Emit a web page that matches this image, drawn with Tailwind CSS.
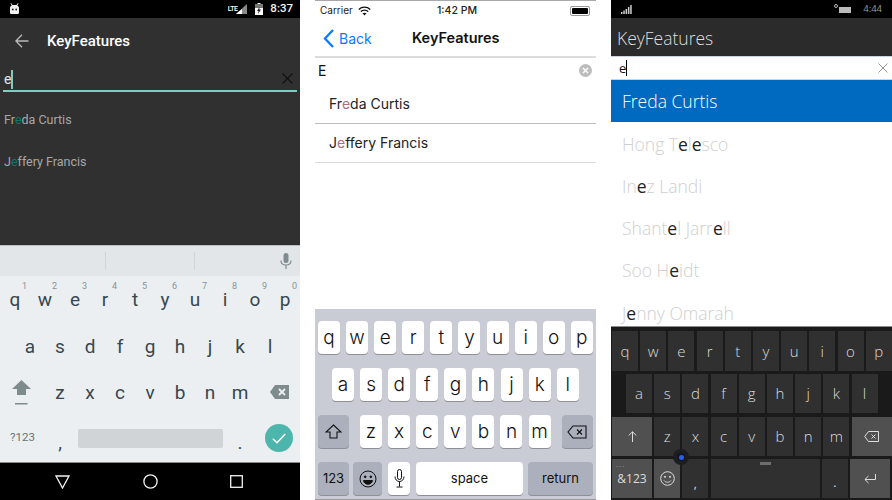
<!DOCTYPE html>
<html lang="en">
<head>
  <meta charset="UTF-8">
  <title>KeyFeatures</title>
  <script src="https://cdn.jsdelivr.net/npm/@tailwindcss/browser@4"></script>
</head>
<body class="bg-white overflow-hidden">
<div class="w-[892px] h-[500px] flex overflow-hidden">

  <!-- Android -->
  <div class="w-[300px] h-[500px] flex flex-col font-['Roboto',sans-serif]">
    <div class="h-[18px] bg-black flex items-center pl-[9px] pr-[7px] text-white">
      <svg width="11" height="12" viewBox="0 0 11 12"><path d="M2 0l1.5 2h4L9 0l.5.4L8.3 2.4c1 .6 1.7 1.4 1.7 2.6v4.5c0 1-.8 1.5-1.6 1.5H2.600C1.800 11 1 10.500 1 9.500V5c0-1.200.7-2 1.700-2.600L1.500.4z" fill="#f1f1f1"/><circle cx="3.800" cy="6.500" r=".9" fill="#222"/><circle cx="7.200" cy="6.500" r=".9" fill="#222"/></svg>
      <div class="ml-auto flex items-center">
        <span class="text-[7px] leading-none font-medium self-start mt-[3px] mr-[-3px] tracking-[-0.5px]">LTE</span>
        <svg width="14" height="12" viewBox="0 0 14 12"><path d="M13 1v10H2z" fill="#8a8a8a"/><path d="M8 6v5H2z" fill="#fff"/></svg>
        <svg class="ml-[7px]" width="8" height="12" viewBox="0 0 8 12"><path d="M2.500 0h3v1H8v11H0V1h2.500z" fill="#fff"/><path d="M0 1h8v4H0z" fill="#777"/><path d="M4.500 4L2 8h1.500L3 11l3-4.500H4.300z" fill="#222"/></svg>
        <span class="ml-[7px] text-[11.500px] leading-none font-medium text-[#f4f4f4]">8:37</span>
      </div>
    </div>
    <div class="h-[227px] bg-[#303030] flex flex-col">
      <div class="h-[46px] flex items-center">
        <svg class="ml-[15px]" width="14" height="14" viewBox="0 0 14 14" fill="none" stroke="#b9b9b9" stroke-width="1.300"><path d="M13.500 7H1M7 .8L.9 7 7 13.200"/></svg>
        <span class="ml-[18px] text-[15px] font-medium text-white">KeyFeatures</span>
      </div>
      <div class="h-[26px] mx-[3px] border-b-2 border-[#80cbc4] box-content flex items-center relative">
        <span class="ml-[1px] text-[14px] leading-none text-[#e4e4e4] mt-[4px]">e</span>
        <span class="w-[2px] h-[19px] bg-[#80cbc4] mt-[5px]"></span>
        <svg class="ml-auto mr-[4px] mt-[3px]" width="11" height="11" viewBox="0 0 11 11" stroke="#111" stroke-width="1.200"><path d="M.5.5l10 10M10.500.5l-10 10"/></svg>
      </div>
      <div class="h-[42px] mt-[7px] pl-[4px] flex items-center text-[12.500px] text-[#a8a8a8]"><span>Fr<span class="text-[#0f766e]">e</span>da Curtis</span></div>
      <div class="h-[42px] pl-[4px] flex items-center text-[12.500px] text-[#a8a8a8]"><span>J<span class="text-[#0f766e]">e</span>ffery Francis</span></div>
    </div>
    <div class="h-[31px] bg-[#e3e6e9] border-t border-[#bcbfc1] flex items-center">
      <span class="ml-[105px] w-px h-[18px] bg-[#d2d5d8]"></span>
      <span class="ml-[88px] w-px h-[18px] bg-[#d2d5d8]"></span>
      <svg class="ml-[85px]" width="12" height="16" viewBox="0 0 12 16" fill="#7f8b90"><rect x="3.500" y="0" width="5" height="10" rx="2.500"/><path d="M1 7.500c0 3 2.200 4.500 5 4.500s5-1.500 5-4.500" fill="none" stroke="#7f8b90" stroke-width="1.200"/><rect x="5.400" y="12" width="1.200" height="4"/></svg>
    </div>
    <div class="h-[186px] bg-[#eceff1] text-[#37474f] text-[19px] leading-none">
      <div class="h-[47px] flex">
        <span class="w-[30px] flex items-center justify-center relative">q<span class="absolute top-[6px] right-[3px] text-[9px] text-[#87939a]">1</span></span>
        <span class="w-[30px] flex items-center justify-center relative">w<span class="absolute top-[6px] right-[3px] text-[9px] text-[#87939a]">2</span></span>
        <span class="w-[30px] flex items-center justify-center relative">e<span class="absolute top-[6px] right-[3px] text-[9px] text-[#87939a]">3</span></span>
        <span class="w-[30px] flex items-center justify-center relative">r<span class="absolute top-[6px] right-[3px] text-[9px] text-[#87939a]">4</span></span>
        <span class="w-[30px] flex items-center justify-center relative">t<span class="absolute top-[6px] right-[3px] text-[9px] text-[#87939a]">5</span></span>
        <span class="w-[30px] flex items-center justify-center relative">y<span class="absolute top-[6px] right-[3px] text-[9px] text-[#87939a]">6</span></span>
        <span class="w-[30px] flex items-center justify-center relative">u<span class="absolute top-[6px] right-[3px] text-[9px] text-[#87939a]">7</span></span>
        <span class="w-[30px] flex items-center justify-center relative">i<span class="absolute top-[6px] right-[3px] text-[9px] text-[#87939a]">8</span></span>
        <span class="w-[30px] flex items-center justify-center relative">o<span class="absolute top-[6px] right-[3px] text-[9px] text-[#87939a]">9</span></span>
        <span class="w-[30px] flex items-center justify-center relative">p<span class="absolute top-[6px] right-[3px] text-[9px] text-[#87939a]">0</span></span>
      </div>
      <div class="h-[46px] flex pl-[15px]">
        <span class="w-[30px] flex items-center justify-center">a</span>
        <span class="w-[30px] flex items-center justify-center">s</span>
        <span class="w-[30px] flex items-center justify-center">d</span>
        <span class="w-[30px] flex items-center justify-center">f</span>
        <span class="w-[30px] flex items-center justify-center">g</span>
        <span class="w-[30px] flex items-center justify-center">h</span>
        <span class="w-[30px] flex items-center justify-center">j</span>
        <span class="w-[30px] flex items-center justify-center">k</span>
        <span class="w-[30px] flex items-center justify-center">l</span>
      </div>
      <div class="h-[46px] flex">
        <span class="w-[45px] flex items-center justify-center">
          <svg width="19" height="25" viewBox="0 0 19 25" fill="#7f8c8d" class="mr-[3px]"><path d="M9.500 0L19 9h-5v6H5V9H0z"/><rect x="3" y="23" width="12.500" height="1.500"/></svg>
        </span>
        <span class="w-[30px] flex items-center justify-center">z</span>
        <span class="w-[30px] flex items-center justify-center">x</span>
        <span class="w-[30px] flex items-center justify-center">c</span>
        <span class="w-[30px] flex items-center justify-center">v</span>
        <span class="w-[30px] flex items-center justify-center">b</span>
        <span class="w-[30px] flex items-center justify-center">n</span>
        <span class="w-[30px] flex items-center justify-center">m</span>
        <span class="w-[45px] flex items-center justify-center">
          <svg width="19" height="14" viewBox="0 0 19 14" class="ml-[4px]"><path d="M5 0h14v14H5L0 7z" fill="#7f8c8d"/><path d="M9 4l6 6M15 4l-6 6" stroke="#eceff1" stroke-width="1.800"/></svg>
        </span>
      </div>
      <div class="h-[46px] flex items-center">
        <span class="w-[45px] text-center text-[11.500px] text-[#65737a]">?123</span>
        <span class="w-[30px] text-center relative top-[4px]">,</span>
        <span class="w-[145px] ml-[3px] h-[19px] bg-[#d0d4d7] rounded-[2px]"></span>
        <span class="w-[30px] ml-[2px] text-center relative top-[4px]">.</span>
        <span class="ml-[10px] w-[28px] h-[28px] rounded-full bg-[#4db6ac] flex items-center justify-center">
          <svg width="14" height="11" viewBox="0 0 14 11" fill="none" stroke="#fff" stroke-width="1.500"><path d="M.8 5.800L5 9.800 13.200 1"/></svg>
        </span>
      </div>
    </div>
    <div class="h-[38px] bg-black border-t border-[#8a8a8a] flex items-center">
      <svg class="ml-[55px]" width="15" height="14" viewBox="0 0 15 14" fill="none" stroke="#f2f2f2" stroke-width="1.300"><path d="M1 1h13L7.500 13z"/></svg>
      <svg class="ml-[73px]" width="15" height="15" viewBox="0 0 15 15" fill="none" stroke="#f2f2f2" stroke-width="1.300"><circle cx="7.500" cy="7.500" r="6.600"/></svg>
      <svg class="ml-[72px]" width="13" height="13" viewBox="0 0 13 13" fill="none" stroke="#f2f2f2" stroke-width="1.300"><rect x=".7" y=".7" width="11.600" height="11.600"/></svg>
    </div>
  </div>

  <!-- iOS -->
  <div class="w-[281px] ml-[15px] h-[500px] flex flex-col font-['Inter',sans-serif] bg-white">
    <div class="h-[20px] border-t border-[#a8a8a8] flex items-center relative text-[10px] text-[#222] pl-[5px]">
      <span>Carrier</span>
      <svg class="ml-[5px]" width="13" height="10" viewBox="0 0 13 10" fill="none" stroke="#111" stroke-width="1.400"><path d="M.8 3.400c3.200-3 8.200-3 11.400 0M2.800 5.600c2.100-1.900 5.300-1.900 7.400 0"/><path d="M4.500 7.300c1.100-.9 2.900-.9 4 0L6.500 9.500z" fill="#111" stroke="none"/></svg>
      <span class="absolute left-[122px] text-[10.500px] font-medium">1:42 PM</span>
      <span class="ml-auto mr-[6px] w-[20px] h-[10px] border border-[#999] rounded-[2px] p-px flex"><span class="flex-1 bg-black rounded-[1px]"></span></span>
    </div>
    <div class="h-[38px] flex items-center relative border-b-2 border-[#dcdcdc]">
      <svg class="ml-[8px]" width="11" height="19" viewBox="0 0 11 19" fill="none" stroke="#0a7aff" stroke-width="2.300"><path d="M10 1L2 9.500 10 18"/></svg>
      <span class="ml-[5px] text-[14px] text-[#0a7aff]">Back</span>
      <span class="absolute left-[97px] text-[14.500px] font-semibold text-[#111]">KeyFeatures</span>
    </div>
    <div class="h-[25px] flex items-center pl-[3px] pr-[4px] text-[14px] text-[#111]">
      <span>E</span>
      <svg class="ml-auto" width="13" height="13" viewBox="0 0 13 13"><circle cx="6.500" cy="6.500" r="6.500" fill="#bdbdbd"/><path d="M4 4l5 5M9 4l-5 5" stroke="#fff" stroke-width="1.500"/></svg>
    </div>
    <div class="h-[41px] border-b border-[#bdbdbd] flex items-center pl-[14px] text-[14px] text-[#222]"><span>Fr<span class="text-[#b06a80]">e</span>da Curtis</span></div>
    <div class="h-[39px] border-b border-[#dcdcdc] flex items-center pl-[14px] pb-[2px] text-[14px] text-[#222]"><span>J<span class="text-[#b06a80]">e</span>ffery Francis</span></div>
    <div class="h-[146px]"></div>
    <div class="h-[191px] bg-[#c9ccd5] pt-[12px] pl-[3px] text-[#111] text-[19px] leading-none border-b border-[#9a9a9a] font-light">
      <div class="flex gap-[6.100px] h-[33px]">
        <span class="w-[22px] bg-white rounded-[4px] shadow-[0_1px_0_#8e9096] flex items-center justify-center">q</span>
        <span class="w-[22px] bg-white rounded-[4px] shadow-[0_1px_0_#8e9096] flex items-center justify-center">w</span>
        <span class="w-[22px] bg-white rounded-[4px] shadow-[0_1px_0_#8e9096] flex items-center justify-center">e</span>
        <span class="w-[22px] bg-white rounded-[4px] shadow-[0_1px_0_#8e9096] flex items-center justify-center">r</span>
        <span class="w-[22px] bg-white rounded-[4px] shadow-[0_1px_0_#8e9096] flex items-center justify-center">t</span>
        <span class="w-[22px] bg-white rounded-[4px] shadow-[0_1px_0_#8e9096] flex items-center justify-center">y</span>
        <span class="w-[22px] bg-white rounded-[4px] shadow-[0_1px_0_#8e9096] flex items-center justify-center">u</span>
        <span class="w-[22px] bg-white rounded-[4px] shadow-[0_1px_0_#8e9096] flex items-center justify-center">i</span>
        <span class="w-[22px] bg-white rounded-[4px] shadow-[0_1px_0_#8e9096] flex items-center justify-center">o</span>
        <span class="w-[22px] bg-white rounded-[4px] shadow-[0_1px_0_#8e9096] flex items-center justify-center">p</span>
      </div>
      <div class="flex gap-[6.100px] h-[33px] mt-[14px] ml-[14px]">
        <span class="w-[22px] bg-white rounded-[4px] shadow-[0_1px_0_#8e9096] flex items-center justify-center">a</span>
        <span class="w-[22px] bg-white rounded-[4px] shadow-[0_1px_0_#8e9096] flex items-center justify-center">s</span>
        <span class="w-[22px] bg-white rounded-[4px] shadow-[0_1px_0_#8e9096] flex items-center justify-center">d</span>
        <span class="w-[22px] bg-white rounded-[4px] shadow-[0_1px_0_#8e9096] flex items-center justify-center">f</span>
        <span class="w-[22px] bg-white rounded-[4px] shadow-[0_1px_0_#8e9096] flex items-center justify-center">g</span>
        <span class="w-[22px] bg-white rounded-[4px] shadow-[0_1px_0_#8e9096] flex items-center justify-center">h</span>
        <span class="w-[22px] bg-white rounded-[4px] shadow-[0_1px_0_#8e9096] flex items-center justify-center">j</span>
        <span class="w-[22px] bg-white rounded-[4px] shadow-[0_1px_0_#8e9096] flex items-center justify-center">k</span>
        <span class="w-[22px] bg-white rounded-[4px] shadow-[0_1px_0_#8e9096] flex items-center justify-center">l</span>
      </div>
      <div class="flex h-[33px] mt-[14px]">
        <span class="w-[31px] bg-[#abb0bc] rounded-[4px] shadow-[0_1px_0_#8e9096] flex items-center justify-center">
          <svg width="17" height="15" viewBox="0 0 17 15" fill="none" stroke="#111" stroke-width="1.100"><path d="M8.500 1L16 8h-4v6H5V8H1z"/></svg>
        </span>
        <div class="flex gap-[6.100px] ml-[11px]">
          <span class="w-[22px] bg-white rounded-[4px] shadow-[0_1px_0_#8e9096] flex items-center justify-center">z</span>
          <span class="w-[22px] bg-white rounded-[4px] shadow-[0_1px_0_#8e9096] flex items-center justify-center">x</span>
          <span class="w-[22px] bg-white rounded-[4px] shadow-[0_1px_0_#8e9096] flex items-center justify-center">c</span>
          <span class="w-[22px] bg-white rounded-[4px] shadow-[0_1px_0_#8e9096] flex items-center justify-center">v</span>
          <span class="w-[22px] bg-white rounded-[4px] shadow-[0_1px_0_#8e9096] flex items-center justify-center">b</span>
          <span class="w-[22px] bg-white rounded-[4px] shadow-[0_1px_0_#8e9096] flex items-center justify-center">n</span>
          <span class="w-[22px] bg-white rounded-[4px] shadow-[0_1px_0_#8e9096] flex items-center justify-center">m</span>
        </div>
        <span class="w-[31px] ml-[11px] bg-[#abb0bc] rounded-[4px] shadow-[0_1px_0_#8e9096] flex items-center justify-center">
          <svg width="20" height="14" viewBox="0 0 20 14" fill="none" stroke="#111" stroke-width="1.100"><path d="M6 1h13v12H6L1 7z"/><path d="M10 4.500l5 5M15 4.500l-5 5"/></svg>
        </span>
      </div>
      <div class="flex h-[33px] mt-[14px] text-[14px] font-normal">
        <span class="w-[31px] bg-[#abb0bc] rounded-[4px] shadow-[0_1px_0_#8e9096] flex items-center justify-center text-[13px]">123</span>
        <span class="w-[29px] ml-[4px] bg-[#abb0bc] rounded-[4px] shadow-[0_1px_0_#8e9096] flex items-center justify-center">
          <svg width="18" height="18" viewBox="0 0 18 18" fill="none" stroke="#111" stroke-width="1"><circle cx="9" cy="9" r="8"/><circle cx="6.200" cy="6.800" r=".9" fill="#111"/><circle cx="11.800" cy="6.800" r=".9" fill="#111"/><path d="M4.500 10.500h9c-.4 2.300-2.200 3.700-4.500 3.700s-4.100-1.400-4.500-3.700z" fill="#111"/></svg>
        </span>
        <span class="w-[22px] ml-[6px] bg-white rounded-[4px] shadow-[0_1px_0_#8e9096] flex items-center justify-center">
          <svg width="11" height="19" viewBox="0 0 11 19" fill="none" stroke="#111" stroke-width="1"><rect x="3.500" y=".5" width="4" height="10" rx="2"/><path d="M1 7.500c0 3 2 5 4.500 5s4.500-2 4.500-5M5.500 12.500v5M2.500 18h6"/></svg>
        </span>
        <span class="w-[107px] ml-[6px] bg-white rounded-[4px] shadow-[0_1px_0_#8e9096] flex items-center justify-center text-[13px]">space</span>
        <span class="w-[65px] ml-[5px] bg-[#abb0bc] rounded-[4px] shadow-[0_1px_0_#8e9096] flex items-center justify-center text-[13px]">return</span>
      </div>
    </div>
  </div>

  <!-- Windows -->
  <div class="w-[281px] ml-[15px] h-[500px] flex flex-col font-['Open_Sans',sans-serif] bg-white">
    <div class="h-[18px] bg-black flex items-center pl-[10px] pr-[10px]">
      <svg width="11" height="9" viewBox="0 0 11 9" fill="#cfcfcf"><rect x="0" y="7" width="1.500" height="2"/><rect x="2.300" y="5.500" width="1.500" height="3.500"/><rect x="4.600" y="4" width="1.500" height="5"/><rect x="6.900" y="2" width="1.500" height="7"/><rect x="9.200" y="0" width="1.500" height="9"/></svg>
      <svg class="ml-auto" width="18" height="10" viewBox="0 0 18 10" fill="none"><path d="M5 3h12v6H5z" fill="#bbb"/><circle cx="2" cy="2" r="1.500" stroke="#bbb"/></svg>
      <span class="ml-[11px] text-[9.500px] text-[#9a9a9a]">4:44</span>
    </div>
    <div class="h-[38px] bg-[#2b2b2b] flex items-center pl-[6px] pt-[3px] text-[17.500px] font-light text-[#dedede]">KeyFeatures</div>
    <div class="h-[24px] border-y border-[#c9d6e0] flex items-center pl-[8px] pr-[4px] text-[13px] text-[#111]">
      <span class="leading-none">e</span><span class="w-px h-[16px] bg-black"></span>
      <svg class="ml-auto" width="10" height="10" viewBox="0 0 10 10" stroke="#777" stroke-width=".8"><path d="M.5.500l9 9M9.500.500l-9 9"/></svg>
    </div>
    <div class="h-[42px] bg-[#0069c0] flex items-center pl-[11px] pt-[1px] text-[17.500px] font-light text-white">Freda Curtis</div>
    <div class="h-[42px] flex items-center pl-[11px] pt-[3px] text-[17.500px] font-light text-[#cfcfcf]"><span>Hong T<span class="text-[#222] font-normal">e</span>l<span class="text-[#222] font-normal">e</span>sco</span></div>
    <div class="h-[42px] flex items-center pl-[11px] pt-[3px] text-[17.500px] font-light text-[#cfcfcf]"><span>In<span class="text-[#222] font-normal">e</span>z Landi</span></div>
    <div class="h-[42px] flex items-center pl-[11px] pt-[3px] text-[17.500px] font-light text-[#cfcfcf]"><span>Shant<span class="text-[#222] font-normal">e</span>l Jarr<span class="text-[#222] font-normal">e</span>ll</span></div>
    <div class="h-[42px] flex items-center pl-[11px] pt-[3px] text-[17.500px] font-light text-[#cfcfcf]"><span>Soo H<span class="text-[#222] font-normal">e</span>idt</span></div>
    <div class="h-[36px] flex items-start pt-[11px] overflow-hidden pl-[11px] text-[17.500px] leading-[24px] font-light text-[#cfcfcf]"><span>J<span class="text-[#222] font-normal">e</span>nny Omarah</span></div>
    <div class="h-[174px] bg-[#1a1a1a] border-t border-[#8c8c8c] relative text-[#dcdcdc] text-[15px] font-light leading-none pl-px">
      <div class="flex gap-[2.200px] h-[40px] mt-[4px]">
        <span class="w-[26px] bg-[#303030] flex items-center justify-center">q</span>
        <span class="w-[26px] bg-[#303030] flex items-center justify-center">w</span>
        <span class="w-[26px] bg-[#303030] flex items-center justify-center">e</span>
        <span class="w-[26px] bg-[#303030] flex items-center justify-center">r</span>
        <span class="w-[26px] bg-[#303030] flex items-center justify-center">t</span>
        <span class="w-[26px] bg-[#303030] flex items-center justify-center">y</span>
        <span class="w-[26px] bg-[#303030] flex items-center justify-center">u</span>
        <span class="w-[26px] bg-[#303030] flex items-center justify-center">i</span>
        <span class="w-[26px] bg-[#303030] flex items-center justify-center">o</span>
        <span class="w-[26px] bg-[#303030] flex items-center justify-center">p</span>
      </div>
      <div class="flex gap-[2.200px] h-[39px] mt-[3px] ml-[14px]">
        <span class="w-[26px] bg-[#303030] flex items-center justify-center">a</span>
        <span class="w-[26px] bg-[#303030] flex items-center justify-center">s</span>
        <span class="w-[26px] bg-[#303030] flex items-center justify-center">d</span>
        <span class="w-[26px] bg-[#303030] flex items-center justify-center">f</span>
        <span class="w-[26px] bg-[#303030] flex items-center justify-center">g</span>
        <span class="w-[26px] bg-[#303030] flex items-center justify-center">h</span>
        <span class="w-[26px] bg-[#303030] flex items-center justify-center">j</span>
        <span class="w-[26px] bg-[#303030] flex items-center justify-center">k</span>
        <span class="w-[26px] bg-[#303030] flex items-center justify-center">l</span>
      </div>
      <div class="flex gap-[2.200px] h-[39px] mt-[4px]">
        <span class="w-[40px] bg-[#505050] flex items-center justify-center">
          <svg width="9" height="11" viewBox="0 0 9 11" fill="none" stroke="#ddd"><path d="M4.500 11V1M.7 4.500L4.500.8l3.800 3.700"/></svg>
        </span>
        <span class="w-[26px] bg-[#303030] flex items-center justify-center">z</span>
        <span class="w-[26px] bg-[#303030] flex items-center justify-center">x</span>
        <span class="w-[26px] bg-[#303030] flex items-center justify-center">c</span>
        <span class="w-[26px] bg-[#303030] flex items-center justify-center">v</span>
        <span class="w-[26px] bg-[#303030] flex items-center justify-center">b</span>
        <span class="w-[26px] bg-[#303030] flex items-center justify-center">n</span>
        <span class="w-[26px] bg-[#303030] flex items-center justify-center">m</span>
        <span class="w-[40px] bg-[#505050] flex items-center justify-center">
          <svg width="15" height="11" viewBox="0 0 15 11" fill="none" stroke="#ddd"><path d="M4.500.5h10v10h-10L.7 5.500z"/><path d="M7.500 3.500l4 4M11.500 3.500l-4 4"/></svg>
        </span>
      </div>
      <div class="flex gap-[2.200px] h-[39px] mt-[3px] text-[12px] font-normal">
        <span class="w-[40px] bg-[#505050] flex items-center justify-center relative">&amp;123<span class="absolute top-[1px] left-[4px] text-[8px] tracking-[1px] text-[#999]">...</span></span>
        <span class="w-[26px] bg-[#505050] flex items-center justify-center">
          <svg width="15" height="15" viewBox="0 0 15 15" fill="none" stroke="#ddd"><circle cx="7.500" cy="7.500" r="6.800"/><circle cx="5" cy="5.800" r=".6" fill="#ddd"/><circle cx="10" cy="5.800" r=".6" fill="#ddd"/><path d="M4 9.500c1.800 2.300 5.200 2.300 7 0"/></svg>
        </span>
        <span class="w-[26px] bg-[#303030] flex items-center justify-center pt-[10px]">,</span>
        <span class="w-[109px] bg-[#303030] flex justify-center pt-[3px]"><span class="w-[11px] h-[3px] bg-[#6e6e6e]"></span></span>
        <span class="w-[26px] bg-[#303030] flex items-center justify-center pt-[8px]">.</span>
        <span class="w-[40px] bg-[#505050] flex items-center justify-center">
          <svg width="12" height="10" viewBox="0 0 12 10" fill="none" stroke="#ddd"><path d="M11.500 0v5.500H1M4.500 2L.9 5.500 4.500 9"/></svg>
        </span>
      </div>
      <span class="absolute left-[62px] top-[122px] w-[16px] h-[16px] rounded-full bg-[#15171c] border-[4px] border-[#1c1e22] flex items-center justify-center"><span class="w-[5px] h-[5px] rounded-full bg-[#2c5cf0] shrink-0"></span></span>
    </div>
  </div>

</div>
</body>
</html>
